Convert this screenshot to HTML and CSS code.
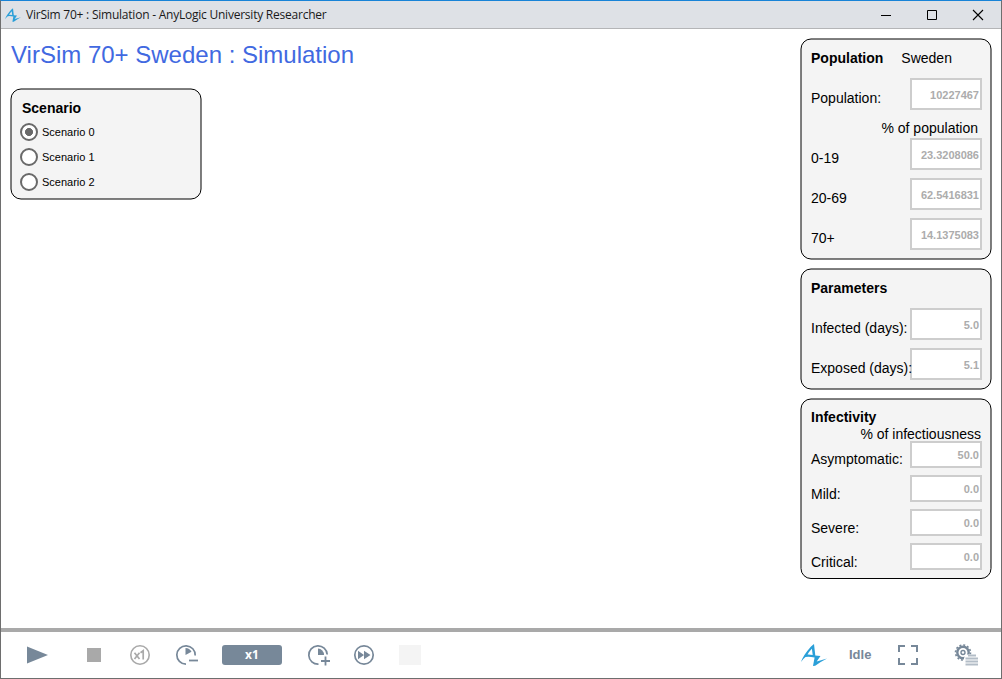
FILE: index.html
```html
<!DOCTYPE html>
<html lang="en">
<head>
<meta charset="utf-8">
<title>VirSim 70+ : Simulation</title>
<link rel="stylesheet" href="styles.css">
</head>
<body>
<div class="window">
  <header class="titlebar">
    <svg class="app-icon" viewBox="0 0 26 22"><use href="#logo"/></svg>
    <span class="title-text">VirSim 70+ : Simulation - AnyLogic University Researcher</span>
    <svg class="controls" width="104" height="12" viewBox="0 0 104 12" fill="none" stroke="#000">
      <path d="M0 6.500h10M46.500 1.500h9v9h-9z"/><path d="M92 1l10 10M102 1l-10 10" stroke-width="1.1"/>
    </svg>
  </header>
  <main class="content">
    <div class="left">
      <h1 class="heading">VirSim 70+ Sweden : Simulation</h1>
      <section class="panel scenario">
        <svg class="frame" width="192" height="112"><rect x="1" y="1" width="190" height="110" rx="10"/></svg>
        <h2 class="name">Scenario</h2>
        <label class="option"><i class="radio on"></i>Scenario 0</label>
        <label class="option"><i class="radio"></i>Scenario 1</label>
        <label class="option"><i class="radio"></i>Scenario 2</label>
      </section>
    </div>
    <div class="right">
      <section class="panel population">
        <svg class="frame" width="192" height="222"><rect x="1" y="1" width="190" height="220" rx="10"/></svg>
        <div class="head"><h2 class="name">Population</h2><span class="country">Sweden</span></div>
        <div class="row"><span>Population:</span><b class="field">10227467</b></div>
        <div class="sub">% of population</div>
        <div class="row"><span>0-19</span><b class="field">23.3208086</b></div>
        <div class="row"><span>20-69</span><b class="field">62.5416831</b></div>
        <div class="row"><span>70+</span><b class="field">14.1375083</b></div>
      </section>
      <section class="panel parameters">
        <svg class="frame" width="192" height="122"><rect x="1" y="1" width="190" height="120" rx="10"/></svg>
        <div class="head"><h2 class="name">Parameters</h2></div>
        <div class="row"><span>Infected (days):</span><b class="field">5.0</b></div>
        <div class="row"><span>Exposed (days):</span><b class="field">5.1</b></div>
      </section>
      <section class="panel infectivity">
        <svg class="frame" width="192" height="182"><rect x="1" y="1" width="190" height="179.500" rx="10"/></svg>
        <div class="head"><h2 class="name">Infectivity</h2></div>
        <div class="sub">% of infectiousness</div>
        <div class="row first"><span>Asymptomatic:</span><b class="field">50.0</b></div>
        <div class="row"><span>Mild:</span><b class="field">0.0</b></div>
        <div class="row"><span>Severe:</span><b class="field">0.0</b></div>
        <div class="row"><span>Critical:</span><b class="field">0.0</b></div>
      </section>
    </div>
  </main>
  <footer class="toolbar">
    <svg class="play" width="22" height="18" viewBox="0 0 22 18"><path d="M0 0.500L21 9L0 17.500z" fill="#778899"/></svg>
    <span class="stop"></span>
    <svg class="real" width="22" height="22" viewBox="0 0 22 22" fill="none" stroke="#a9a9a9">
      <circle cx="11" cy="11" r="9.200" stroke-width="1.600"/>
      <path d="M5.500 8.700l5 6.300M10.500 8.700l-5 6.300M11.500 8.700l2.700-2V15.500" stroke-width="1.700"/>
    </svg>
    <svg class="slower" width="24" height="22" viewBox="0 0 24 22" fill="none" stroke="#778899">
      <path d="M11 20.200A9.200 9.200 0 1 1 20.200 11.500" stroke-width="1.700"/>
      <path d="M10.500 4A7 7 0 0 1 16.500 7.800L10.500 11z" fill="#778899" stroke="none"/>
      <path d="M14 16.500h9" stroke-width="1.800"/>
    </svg>
    <span class="speed">x1</span>
    <svg class="faster" width="24" height="22" viewBox="0 0 24 22" fill="none" stroke="#778899">
      <path d="M11.500 20.200A9.200 9.200 0 1 1 20.200 10.500" stroke-width="1.700"/>
      <path d="M11 4.500A6.500 6.500 0 0 1 17 11H11z" fill="#778899" stroke="none"/>
      <path d="M14 17h9M18.500 12.500v9" stroke-width="1.800"/>
    </svg>
    <svg class="virtual" width="22" height="22" viewBox="0 0 22 22">
      <circle cx="11" cy="11" r="9.200" fill="none" stroke="#778899" stroke-width="1.700"/>
      <path d="M5 6.700l6 4.300-6 4.300zM11 6.700l6.500 4.300-6.500 4.300z" fill="#778899"/>
    </svg>
    <span class="blank"></span>
    <svg class="brand" width="26" height="22" viewBox="0 0 26 22">
      <g id="logo" fill="#2a9fd8" fill-rule="evenodd">
        <path d="M0 18Q2 11.500 10 2.500L13 0l1.300 11.500 5.200.5-3.800 5.400L26 14.500Q20 17.500 14.200 21.800L12 22l1.600-8.600Q8 12.300 4.500 12.900 2.300 14.500 0 18zM6.500 10.600Q9 10.500 11.700 11L10.900 4.800Q8.200 7.500 6.500 10.600z"/>
      </g>
    </svg>
    <span class="status">Idle</span>
    <svg class="full" width="20" height="20" viewBox="0 0 20 20" fill="none" stroke="#778899" stroke-width="2">
      <path d="M1 7V1h6M13 1h6v6M19 13v6h-6M7 19H1v-6"/>
    </svg>
    <svg class="settings" width="24" height="22" viewBox="0 0 24 22" fill="none">
      <circle cx="9" cy="8.500" r="7.500" stroke="#778899" stroke-width="1.600" stroke-dasharray="2 1.927"/>
      <circle cx="9" cy="8.500" r="5.700" stroke="#778899" stroke-width="2.400"/>
      <circle cx="9" cy="8.500" r="2" stroke="#778899" stroke-width="1.400"/>
      <path d="M12 10.500h12V22H10v-8z" fill="#fff"/>
      <path d="M14 11.500h8M11.500 14.500H24M11.500 17.500H24M11.500 20.500H24" stroke="#b3bdc7" stroke-width="1.900"/>
    </svg>
  </footer>
</div>
</body>
</html>
```
FILE: styles.css
```css
* { box-sizing: border-box; }
body { margin: 0; font-family: "Liberation Sans", Arial, sans-serif; color: #000; }
svg { display: block; flex: none; }
h1, h2 { margin: 0; }

.window {
  position: relative; z-index: 0;
  display: flex; flex-direction: column; width: 1002px; height: 679px;
  background: #fff; border: 1px solid #6e6e6e; border-top-color: #1883d7; overflow: hidden;
}
.titlebar {
  display: flex; align-items: center; height: 28px; flex: none;
  background: #dee1e6; border-bottom: 1px solid #b4b5b7; padding-left: 4px;
}
.app-icon { width: 16px; height: 14px; }
.title-text { margin-left: 5px; font: 12px/20px "Open Sans", sans-serif; letter-spacing: -0.23px; white-space: nowrap; color: #1a1a1a; }
.controls { margin-left: auto; margin-right: 16px; }

.content { display: flex; justify-content: space-between; flex: 1; }
.left { padding: 10px 0 0 9px; }
.heading { padding-left: 1px; font-size: 24px; font-weight: 400; line-height: 32px; color: #4169e1; white-space: nowrap; }
.right { display: flex; flex-direction: column; gap: 8px; width: 201px; padding-top: 9px; }

.panel { position: relative; width: 192px; padding: 10px 10px 0 11px; font-size: 14px; line-height: 20px; }
.frame { position: absolute; left: 0; top: 0; z-index: -1; fill: #f4f4f4; stroke: #000; stroke-width: 1; }
.name { font-size: 14px; line-height: 20px; }
.scenario { height: 112px; margin-top: 17px; padding-left: 10px; }
.scenario .name { padding-left: 2px; height: 21px; }
.option { display: flex; align-items: center; gap: 4px; height: 25px; font-size: 11px; }
.radio { width: 18px; height: 18px; border: 2px solid #696969; border-radius: 50%; background: #fff; }
.on { background: radial-gradient(circle, #696969 3.7px, #fff 4.3px); }

.population { height: 222px; }
.parameters { height: 122px; }
.infectivity { height: 182px; padding-top: 9px; }
.head { display: flex; height: 30px; }
.country { margin-left: 18px; }
.row { display: flex; justify-content: space-between; height: 40px; white-space: nowrap; }
.row span { z-index: 1; width: 99px; padding-top: 10px; }
.sub { height: 20px; padding-right: 4px; text-align: right; white-space: nowrap; }
.field {
  width: 72px; height: 32px; flex: none; border: 2px solid #cdcdcd; background: #fff;
  padding-right: 1px; text-align: right; font-size: 11px; line-height: 30px; color: #acacac;
}
.infectivity .head { height: 17px; }
.infectivity .sub { height: 17px; padding-right: 1px; }
.infectivity .row { height: 34px; }
.infectivity .row span { padding-top: 9px; }
.infectivity .first span { padding-top: 8px; }
.infectivity .field { height: 27px; line-height: 24px; }

.toolbar {
  display: flex; align-items: center; height: 50px; flex: none;
  border-top: 4px solid #a9a9a9; padding: 0 23px 0 26px;
}
.stop { width: 14px; height: 14px; margin-left: 38px; background: #a9a9a9; }
.real { margin-left: 28px; }
.slower { margin-left: 24px; }
.speed {
  width: 60px; height: 20px; margin-left: 23px; border-radius: 3px; background: #778899;
  color: #fff; text-align: center; font: bold 12px/19px "Open Sans", sans-serif;
}
.faster { margin-left: 25px; }
.virtual { margin-left: 22px; }
.blank { width: 22px; height: 20px; margin-left: 24px; background: #f4f4f4; }
.brand { margin-left: auto; }
.status { margin-left: 22px; width: 26px; font-size: 13px; line-height: 16px; padding-bottom: 1px; font-weight: bold; color: #778899; }
.full { margin-left: 23px; }
.settings { margin-left: 36px; }
```
